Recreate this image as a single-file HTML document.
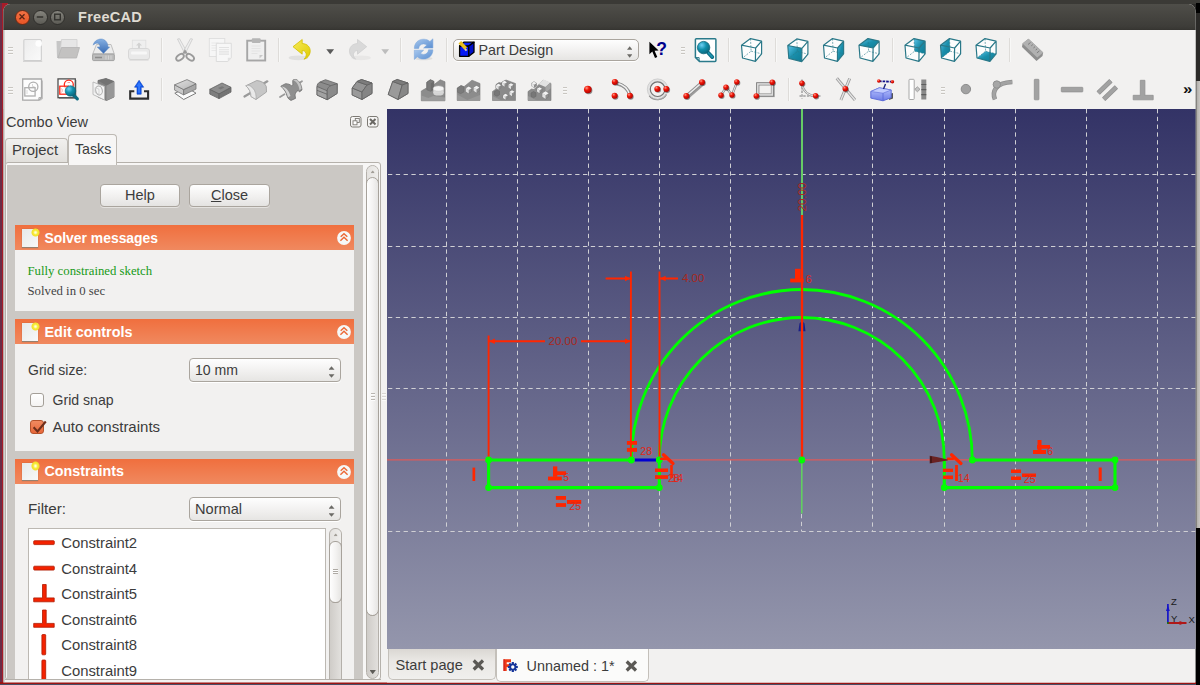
<!DOCTYPE html>
<html><head><meta charset="utf-8"><title>FreeCAD</title>
<style>
*{box-sizing:border-box;margin:0;padding:0}
html,body{width:1200px;height:685px;overflow:hidden;background:#2c2b29}
body{position:relative;font-family:"Liberation Sans","DejaVu Sans",sans-serif;font-size:14.5px;color:#3c3c3c}
div,span{position:absolute}
svg{position:absolute;overflow:visible}
#desk{left:0;top:0;width:1200px;height:685px;background:#2b2a28}
#deskl{left:0;top:3.3px;width:8px;height:682px;background:linear-gradient(90deg,#6b2d47 0 2.2px,#a81c28 2.2px 8px)}
#topstrip{left:0;top:0;width:1200px;height:4px;background:#3b3a36}
#rstrip1{left:1195.5px;top:3px;width:5px;height:10px;background:#000}
#rstrip2{left:1195.5px;top:80.5px;width:5px;height:447.5px;background:linear-gradient(90deg,#6e6c68,#b5b3af 30%,#cfcdc9)}
#rstrip3{left:1195.5px;top:528px;width:5px;height:157px;background:#000}
#botstrip{left:0;top:682px;width:1196px;height:3px;background:linear-gradient(#9a1414 0 1.6px,#4a5068 1.6px)}
#win{left:0;top:0;width:1200px;height:685px;background:#f2f1f0;clip-path:inset(4px 4.5px 2.5px 3.3px round 7px 7px 0 0)}
#title{left:0;top:0;width:1200px;height:30px;background:linear-gradient(#3b3a36 0 3.6px,#4f4e49 4px,#3e3d39 26px,#383733 29.4px,#2e2d2a 30px);}
#title .t{left:78px;top:8px;font-weight:bold;font-size:14.5px;line-height:19px;color:#dfdbd2;letter-spacing:.3px;white-space:nowrap}
.wb{width:15.4px;height:15.4px;border-radius:50%;top:9.5px;background:linear-gradient(#85847d,#5c5b55);border:1px solid #302f2c}
.wb.c{background:linear-gradient(#f27245,#e85526);border-color:#6e2a14}
.sep{width:2px;height:24px;background:#dedcd9;border-right:1px solid #f8f8f7}
.grip{width:4.5px;height:8px;background:repeating-linear-gradient(#c9c6c1 0 1px,#f8f8f7 1px 2px,#f2f1f0 2px 3px)}
.lbl{white-space:nowrap;line-height:18px}
.combo{border:1px solid #aaa59e;border-radius:4px;background:linear-gradient(#fefefe,#f0efee 60%,#e6e5e3);box-shadow:0 1px 0 #fff}
.ud{width:5.4px;height:3.5px;background:#6b6a66}
.ud.u{clip-path:polygon(50% 0,100% 100%,0 100%)}
.ud.d{clip-path:polygon(0 0,100% 0,50% 100%)}
.btn{border:1px solid #aaa59e;border-radius:4px;background:linear-gradient(#fefefe,#f1f0ef 55%,#e4e3e1);text-align:center;line-height:21px;box-shadow:0 1px 0 #e4e2df}
.hdr{left:15px;width:339px;height:24.8px;background:linear-gradient(#f06f3e,#f0895f);color:#fff;font-weight:bold;font-size:14.5px}
.hdr .lbl{left:29.5px;top:3.5px}
.hdr .pg{left:6.5px;top:3.8px;width:16px;height:18.8px;background:linear-gradient(135deg,#e6e9ea,#f8f8f8);border-bottom:1px solid #96806f;box-shadow:0 0 1px rgba(120,70,40,.5)}
.hdr .st{left:15.5px;top:2.6px;width:9.4px;height:9.4px;border-radius:50%;background:radial-gradient(#ffffd8 8%,#f8ec3a 35%,#f3e02c 55%,rgba(243,224,44,0) 72%)}
.hdr .col{left:322px;top:6px;width:13px;height:13px;border-radius:50%;background:#fff}
.body{left:15px;width:339px;background:#f2f1f0;overflow:hidden}
.cb{width:14px;height:14px;border:1px solid #a49f98;border-radius:3px;background:linear-gradient(#fff,#f4f3f2)}
.cb.on{background:linear-gradient(#f08a60,#e8683a);border-color:#b5532b}
.row{left:0;width:296px;height:25.5px}
.row .lbl{left:32.7px;top:4px}
.ser{font-family:"Liberation Serif","DejaVu Serif",serif;font-size:12.75px;white-space:nowrap;line-height:16px}
</style></head><body>
<div id="desk"></div>
<div id="topstrip"></div>
<div id="deskl"></div>
<div id="rstrip1"></div><div id="rstrip2"></div><div id="rstrip3"></div>
<div id="botstrip"></div>
<div id="win">
 <div id="title">
  <div class="wb c" style="left:14.5px"></div>
  <div class="wb" style="left:32.5px"></div>
  <div class="wb" style="left:50px"></div>
  <svg style="left:14px;top:9px" width="52" height="16" viewBox="14 9 52 16"><path d="M19.5 14.300l5 5M24.5 14.300l-5 5" stroke="#5a2413" stroke-width="1.3"/><path d="M36.8 17h6.4" stroke="#33322e" stroke-width="1.6"/><rect x="54.7" y="14.2" width="5.6" height="5.6" fill="none" stroke="#33322e" stroke-width="1.4"/></svg>
  <div class="t">FreeCAD</div>
 </div>
<div style="left:0;top:30px;width:1200px;height:79px;background:#f2f1f0"></div>
<div class="sep" style="left:161px;top:38px"></div>
<div class="sep" style="left:278px;top:38px"></div>
<div class="sep" style="left:400px;top:38px"></div>
<div class="sep" style="left:446px;top:38px"></div>
<div class="sep" style="left:728px;top:38px"></div>
<div class="sep" style="left:774.5px;top:38px"></div>
<div class="sep" style="left:892px;top:38px"></div>
<div class="sep" style="left:1009px;top:38px"></div>
<div class="sep" style="left:161px;top:78px;height:23px"></div>
<div class="sep" style="left:787.5px;top:78px;height:23px"></div>
<div class="grip" style="left:8px;top:46.5px"></div>
<div class="grip" style="left:680.7px;top:46.5px"></div>
<div class="grip" style="left:8px;top:86.7px"></div>
<div class="grip" style="left:562.7px;top:86.7px"></div>
<div class="grip" style="left:940.7px;top:86.7px"></div>
<div class="combo" style="left:453px;top:38.5px;width:186px;height:22.5px;border-radius:5px"><div class="lbl" style="left:24.5px;top:1.5px;font-size:14.3px">Part Design</div><div class="ud u" style="left:173px;top:6.7px"></div><div class="ud d" style="left:173px;top:14.7px"></div></div>
<div class="lbl" style="left:1183.2px;top:80.3px;font-weight:bold;font-size:15px;color:#111;transform:scaleX(1.12);transform-origin:0 0">&#187;</div>
<svg style="left:0;top:30px" width="1200" height="79" viewBox="0 30 1200 79">
<defs>
<linearGradient id="gpg" x1="0" y1="0" x2="1" y2="1"><stop offset="0" stop-color="#ececec"/><stop offset="1" stop-color="#fafafa"/></linearGradient>
<radialGradient id="gteal" cx=".35" cy=".3" r=".8"><stop offset="0" stop-color="#6fd0f4"/><stop offset=".45" stop-color="#1291ad"/><stop offset="1" stop-color="#0a5f74"/></radialGradient>
<linearGradient id="gtealf" x1="0" y1="0" x2="1" y2="1"><stop offset="0" stop-color="#5cc4ea"/><stop offset=".5" stop-color="#1a8eaa"/><stop offset="1" stop-color="#0f7d97"/></linearGradient>
<radialGradient id="gred" cx=".35" cy=".3" r=".75"><stop offset="0" stop-color="#ff9a8a"/><stop offset=".4" stop-color="#f01808"/><stop offset="1" stop-color="#a80000"/></radialGradient>
<linearGradient id="gyel" x1="0" y1="0" x2="1" y2="1"><stop offset="0" stop-color="#f6ea5a"/><stop offset="1" stop-color="#e0cc00"/></linearGradient>
<linearGradient id="gblue" x1="0" y1="0" x2="0" y2="1"><stop offset="0" stop-color="#86b0e2"/><stop offset="1" stop-color="#3a6cb4"/></linearGradient>
<linearGradient id="grf" x1="0" y1="0" x2="1" y2="1"><stop offset="0" stop-color="#a8c8ee"/><stop offset="1" stop-color="#5a8ed0"/></linearGradient>
<linearGradient id="gbox" x1="0" y1="0" x2="0" y2="1"><stop offset="0" stop-color="#b9c4ff"/><stop offset="1" stop-color="#6d7ce6"/></linearGradient>
<linearGradient id="ggr" x1="0" y1="0" x2="1" y2="1"><stop offset="0" stop-color="#e0e0e0"/><stop offset="1" stop-color="#b4b4b4"/></linearGradient>
</defs>
<g><rect x="23.8" y="39.5" width="17.6" height="21" rx="1" fill="url(#gpg)" stroke="#d2d2d2" stroke-width="1.2"/><path d="M23 61.3H42.2" stroke="#c4c4c4" stroke-width="1.2" opacity=".7"/><circle cx="38.7" cy="43.5" r="3.3" fill="#fff" opacity=".9"/></g>
<g><path d="M56.5 41h5l-1 17h-3.5z" fill="#c6c6c6"/><path d="M61.5 39.5h15.5v8l-1.5 10h-16z" fill="#e6e6e6" stroke="#cfcfcf" stroke-width=".8"/><path d="M61.5 47.5h18l-3 10.5h-18.5z" fill="#c3c2c1" stroke="#b4b4b4" stroke-width=".8"/></g>
<g><path d="M96.5 44.5h14.5l3.3 9.5h-21.6z" fill="#ececec" stroke="#b9b9b9" stroke-width=".9"/><rect x="92.6" y="54" width="21.7" height="6.6" rx="1" fill="#bdbdbd" stroke="#9a9a9a" stroke-width=".9"/><path d="M95 57.5h7" stroke="#8c8c8c" stroke-width="1.3"/><path d="M106 55.5v4M108.5 55.5v4M111 55.5v4" stroke="#d4d4d4" stroke-width="1"/><path d="M93.2 45.2C94 40.5 99 38.4 102.6 39.2C106.2 40 108 43.5 108 47L109.6 47L103.5 53.4L97.2 47L100 47C100 45 99.3 43.5 97.5 43.200C95.8 43 94.3 43.8 93.2 45.200Z" fill="url(#gblue)" stroke="#5a88c4" stroke-width=".5"/></g>
<g opacity=".9"><rect x="132.3" y="40.2" width="13.5" height="9.5" fill="#efefef" stroke="#dcdcdc" stroke-width=".8"/><path d="M139 42.5l-3 3h2v2.500h2v-2.500h2z" fill="#cfcfcf"/><rect x="128.5" y="48.5" width="21" height="11" rx="2.5" fill="#e9e9e9" stroke="#d2d2d2" stroke-width=".9"/><rect x="131" y="51.5" width="16" height="3" rx="1" fill="#f8f8f8"/><path d="M129.5 60h19" stroke="#cfcfcf" stroke-width="1"/></g>
<g><path d="M177.5 39l2-.3 7.5 13.5-2.2 1.500z" fill="#eeeeee" stroke="#c9c9c9" stroke-width=".8"/><path d="M192.5 39l-2-.3-7.5 13.5 2.2 1.500z" fill="#eeeeee" stroke="#c9c9c9" stroke-width=".8"/><ellipse cx="180" cy="57.3" rx="4.3" ry="2.6" transform="rotate(-38 180 57.3)" fill="none" stroke="#9b9b9b" stroke-width="1.9"/><ellipse cx="190.2" cy="57.3" rx="4.3" ry="2.6" transform="rotate(38 190.2 57.3)" fill="none" stroke="#9b9b9b" stroke-width="1.9"/><path d="M183.5 53.500l1.5-2.5 1.5 2.5" stroke="#9b9b9b" stroke-width="1.8" fill="none"/></g>
<g><rect x="209.3" y="38.5" width="15.5" height="18" fill="#f6f6f6" stroke="#dedede" stroke-width=".9"/><path d="M211.5 43h7M211.5 45.500h7M211.5 48h7M211.5 50.500h7" stroke="#e6e6e6" stroke-width=".9"/><path d="M216.3 43.300h15v14.500l-3.5 3.700h-11.500z" fill="#f7f7f7" stroke="#d9d9d9" stroke-width=".9"/><path d="M219 47.500h10M219 49.700h10M219 51.900h10M219 54.100h10" stroke="#e2e2e2" stroke-width="1.1"/><path d="M227.8 61.500v-3.700h3.500z" fill="#e2e2e2"/></g>
<g><rect x="247.2" y="40.7" width="18" height="19.8" fill="#f0f0f0" stroke="#a6a6a6" stroke-width="1.9"/><rect x="250" y="43.5" width="12.5" height="14.5" fill="#efefef"/><path d="M251.5 46h9M251.5 48.500h9M251.5 51h9M251.5 53.500h6" stroke="#e3e3e3" stroke-width="1.2"/><rect x="251.8" y="38.3" width="8.8" height="4.7" rx="1" fill="#b5b5b5"/><path d="M259.5 58.500v-3.500h3.500z" fill="#c8c8c8"/></g>
<g><ellipse cx="298.5" cy="57.8" rx="10" ry="2.4" fill="#000" opacity=".07"/><path d="M293 46.700l9.2-7.200v4c5.5.3 8.3 4 8 8.2-.3 3.8-3 6.6-6.2 7.5 2-1.8 2.7-4 2-6-.6-1.7-2-2.6-3.8-2.700v3.700z" fill="url(#gyel)" stroke="#d3bf00" stroke-width=".8" stroke-linejoin="round"/></g>
<path d="M326.3 49.200h7.800l-3.9 5z" fill="#5a5a5a"/>
<g><ellipse cx="361" cy="57.8" rx="10" ry="2.4" fill="#000" opacity=".04"/><path d="M366.7 46.700l-9.2-7.200v4c-5.5.3-8.3 4-8 8.2.3 3.8 3 6.6 6.2 7.5-2-1.8-2.7-4-2-6 .6-1.7 2-2.6 3.8-2.700v3.700z" fill="#d9d9d9" stroke="#cfcfcf" stroke-width=".8" stroke-linejoin="round"/></g>
<path d="M381.3 49.200h7.800l-3.9 5z" fill="#bdbdbd"/>
<g><ellipse cx="423.5" cy="58.5" rx="9" ry="1.8" fill="#000" opacity=".08"/><path d="M414.3 48.500c0-5.5 4-9.3 9.3-9.3 2.6 0 4.7.8 6.3 2.300l3-2.700v9.300h-9.300l3.1-3c-.9-.8-1.9-1.2-3.2-1.2-2.7 0-4.6 1.9-4.8 4.600z" fill="url(#grf)" stroke="#78a4da" stroke-width=".5"/><path d="M432.9 49.800c0 5.5-4 9.3-9.3 9.3-2.6 0-4.7-.8-6.3-2.300l-3 2.700v-9.300h9.300l-3.1 3c.9.8 1.9 1.2 3.2 1.2 2.7 0 4.6-1.9 4.8-4.600z" fill="url(#grf)" stroke="#78a4da" stroke-width=".5"/></g>
<g stroke="#000" stroke-width="1.3" stroke-linejoin="round"><path d="M459.6 46h9.200v10.300h-9.200z" fill="#0618f4"/><path d="M459.6 46l4.2-3.800h10.200l-5.2 3.800z" fill="#0a24ff"/><path d="M468.8 46l5.2-3.800v10l-5.2 4.100z" fill="#0010c8"/></g><path d="M459.8 42.200l6 6.3" stroke="#e8be1c" stroke-width="3.6"/><path d="M465 49l1.6 1.6" stroke="#d8d0b0" stroke-width="2"/>
<path d="M649.4 41.800v12.400l2.9-2.6 2.7 6.3 2.3-1-2.7-6.1 4-.2z" fill="#000"/><text x="656.3" y="55" font-family="Liberation Sans,sans-serif" font-weight="bold" font-size="17.5" fill="#00008c">?</text>
<g><path d="M696.3 38.800h18.700a.9.9 0 0 1 .9.900v20.800a.9.9 0 0 1-.9.900h-15.500l-4.1-4v-17.700a.9.9 0 0 1 .9-.9z" fill="#fff" stroke="#2a7a8a" stroke-width="1.5"/><path d="M695.6 57.600h3.500v3.5" fill="none" stroke="#2a7a8a" stroke-width="1"/><path d="M708 52.500l4.3 4.6" stroke="#0e6c82" stroke-width="3.8" stroke-linecap="round"/><path d="M708.5 53l3.6 3.9" stroke="#1c94b0" stroke-width="1.8" stroke-linecap="round"/><circle cx="703.6" cy="47.6" r="6.2" fill="url(#gteal)" stroke="#0c6478" stroke-width=".8"/></g>
<path d="M741.5 45.2L750.5 38.6L761.6 41.1L761.6 53.8L755.4 61.4L742.5 58.0Z" fill="#fdfdfd"/><path d="M750.5 38.6L751.1 51.2L742.5 58.0M751.1 51.2L761.6 53.8" stroke="#2a7888" stroke-width=".8" stroke-dasharray="2 1.3" fill="none" opacity=".75"/><path d="M741.5 45.2L755.6 48.0L761.6 41.1L750.5 38.6ZM741.5 45.2L742.5 58.0L755.4 61.4L761.6 53.8L761.6 41.1M755.6 48.0L755.4 61.4" stroke="#2a7888" stroke-width="1.2" fill="none" stroke-linejoin="round"/>
<path d="M787.8 45.5L796.8 38.9L807.9 41.4L807.9 54.1L801.7 61.7L788.8 58.3Z" fill="#fdfdfd"/><path d="M787.8 45.5L801.9 48.3L801.7 61.7L788.8 58.3Z" fill="url(#gtealf)"/><path d="M796.8 38.9L797.4 51.5L788.8 58.3M797.4 51.5L807.9 54.1" stroke="#2a7888" stroke-width=".8" stroke-dasharray="2 1.3" fill="none" opacity=".75"/><path d="M787.8 45.5L801.9 48.3L807.9 41.4L796.8 38.9ZM787.8 45.5L788.8 58.3L801.7 61.7L807.9 54.1L807.9 41.4M801.9 48.3L801.7 61.7" stroke="#2a7888" stroke-width="1.2" fill="none" stroke-linejoin="round"/>
<path d="M823.5 45.2L832.5 38.6L843.6 41.1L843.6 53.8L837.4 61.4L824.5 58.0Z" fill="#fdfdfd"/><path d="M837.6 48.0L843.6 41.1L843.6 53.8L837.4 61.4Z" fill="url(#gtealf)"/><path d="M832.5 38.6L833.1 51.2L824.5 58.0M833.1 51.2L843.6 53.8" stroke="#2a7888" stroke-width=".8" stroke-dasharray="2 1.3" fill="none" opacity=".75"/><path d="M823.5 45.2L837.6 48.0L843.6 41.1L832.5 38.6ZM823.5 45.2L824.5 58.0L837.4 61.4L843.6 53.8L843.6 41.1M837.6 48.0L837.4 61.4" stroke="#2a7888" stroke-width="1.2" fill="none" stroke-linejoin="round"/>
<path d="M859.0 45.2L868.0 38.6L879.1 41.1L879.1 53.8L872.9 61.4L860.0 58.0Z" fill="#fdfdfd"/><path d="M859.0 45.2L873.1 48.0L879.1 41.1L868.0 38.6Z" fill="url(#gtealf)"/><path d="M868.0 38.6L868.6 51.2L860.0 58.0M868.6 51.2L879.1 53.8" stroke="#2a7888" stroke-width=".8" stroke-dasharray="2 1.3" fill="none" opacity=".75"/><path d="M859.0 45.2L873.1 48.0L879.1 41.1L868.0 38.6ZM859.0 45.2L860.0 58.0L872.9 61.4L879.1 53.8L879.1 41.1M873.1 48.0L872.9 61.4" stroke="#2a7888" stroke-width="1.2" fill="none" stroke-linejoin="round"/>
<path d="M905.0 45.2L914.0 38.6L925.1 41.1L925.1 53.8L918.9 61.4L906.0 58.0Z" fill="#fdfdfd"/><path d="M914.0 38.6L925.1 41.1L925.1 53.8L914.6 51.2Z" fill="url(#gtealf)"/><path d="M914.0 38.6L914.6 51.2L906.0 58.0M914.6 51.2L925.1 53.8" stroke="#2a7888" stroke-width=".8" stroke-dasharray="2 1.3" fill="none" opacity=".75"/><path d="M905.0 45.2L919.1 48.0L925.1 41.1L914.0 38.6ZM905.0 45.2L906.0 58.0L918.9 61.4L925.1 53.8L925.1 41.1M919.1 48.0L918.9 61.4" stroke="#2a7888" stroke-width="1.2" fill="none" stroke-linejoin="round"/>
<path d="M940.5 45.2L949.5 38.6L960.6 41.1L960.6 53.8L954.4 61.4L941.5 58.0Z" fill="#fdfdfd"/><path d="M940.5 45.2L949.5 38.6L950.1 51.2L941.5 58.0Z" fill="url(#gtealf)"/><path d="M949.5 38.6L950.1 51.2L941.5 58.0M950.1 51.2L960.6 53.8" stroke="#2a7888" stroke-width=".8" stroke-dasharray="2 1.3" fill="none" opacity=".75"/><path d="M940.5 45.2L954.6 48.0L960.6 41.1L949.5 38.6ZM940.5 45.2L941.5 58.0L954.4 61.4L960.6 53.8L960.6 41.1M954.6 48.0L954.4 61.4" stroke="#2a7888" stroke-width="1.2" fill="none" stroke-linejoin="round"/>
<path d="M976.0 45.2L985.0 38.6L996.1 41.1L996.1 53.8L989.9 61.4L977.0 58.0Z" fill="#fdfdfd"/><path d="M977.0 58.0L989.9 61.4L996.1 53.8L985.6 51.2Z" fill="url(#gtealf)"/><path d="M985.0 38.6L985.6 51.2L977.0 58.0M985.6 51.2L996.1 53.8" stroke="#2a7888" stroke-width=".8" stroke-dasharray="2 1.3" fill="none" opacity=".75"/><path d="M976.0 45.2L990.1 48.0L996.1 41.1L985.0 38.6ZM976.0 45.2L977.0 58.0L989.9 61.4L996.1 53.8L996.1 41.1M990.1 48.0L989.9 61.4" stroke="#2a7888" stroke-width="1.2" fill="none" stroke-linejoin="round"/>
<g><path d="M1028.5 38.700l14.7 13.8-.7 3.5-6 5-14.5-14 .500-3.500z" fill="#8e8e8e"/><path d="M1028.5 38.700l14.7 13.8-6 5-14.7-14z" fill="#b1b1b1"/><path d="M1030.5 42.500l-2.5 2M1032.8 44.600l-1.5 1.200M1035 46.700l-1.5 1.200M1037.2 48.800l-1.5 1.200M1039.4 50.900l-2.5 2" stroke="#7d7d7d" stroke-width="1"/></g>
<g><path d="M24 80.5v20h17l2-2v-18z" fill="#b9b9b9" opacity=".8"/><path d="M22.7 79h18.8v18.6l-2.6 2.6h-16.2z" fill="#fdfdfd" stroke="#a9a9a9" stroke-width="1.3"/><path d="M38.9 100.2v-2.6h2.6" fill="none" stroke="#a9a9a9" stroke-width="1"/><circle cx="33.3" cy="86.8" r="4.6" fill="none" stroke="#b0b0b0" stroke-width="1.3"/><rect x="24.8" y="87.7" width="10.3" height="8.3" fill="none" stroke="#b0b0b0" stroke-width="1.3"/><path d="M27 90v4M32.5 84v2.5h2" stroke="#cfcfcf" stroke-width=".8" fill="none"/></g>
<g><path d="M59 80v19h17.5v-19z" fill="#8c8c8c" opacity=".7"/><rect x="58" y="78.9" width="17.3" height="18.8" fill="#fff" stroke="#4f4f4f" stroke-width="1.3"/><circle cx="68.8" cy="84.7" r="4.5" fill="none" stroke="#ff2a1a" stroke-width="1.3"/><rect x="59.8" y="86.2" width="8.5" height="8" fill="#fff" fill-opacity=".6" stroke="#ff2a1a" stroke-width="1.3"/><path d="M61.5 88.5c1 1 1 3 0 4M67.5 82.5h2.5" stroke="#e88" stroke-width=".8" fill="none"/><path d="M73.5 95l3.8 3.8" stroke="#0e6c82" stroke-width="3.2" stroke-linecap="round"/><circle cx="70.5" cy="91" r="5.3" fill="url(#gteal)" stroke="#0c6478" stroke-width=".6"/></g>
<g><path d="M98 80.5l8-2 8 3v15.5l-7.5 3.5-8.5-3.5z" fill="#828282" stroke="#6a6a6a" stroke-width=".8"/><path d="M106.5 85.5l7.5-4v15.5l-7.5 3.5z" fill="#979797"/><path d="M98 80.5l8-2 8 3-7.5 4z" fill="#737373"/><path d="M93 82l11.5 4.5v13.5l-11.5-5.5z" fill="#f4f4f4" stroke="#b5b5b5" stroke-width=".9"/><ellipse cx="99" cy="90.5" rx="3.3" ry="4.5" transform="rotate(-12 99 90.5)" fill="none" stroke="#aaaaaa" stroke-width="1"/><path d="M95 87.5l4 1.7v5l-4-1.7z" fill="none" stroke="#c8c8c8" stroke-width=".7"/></g>
<g><path d="M134.3 91.3h-4.1v7.3h17.9v-7.3h-4.1" fill="none" stroke="#2e2e2e" stroke-width="2.1"/><path d="M139.1 80.3l4.6 6.9h-2.5v7h-4.2v-7h-2.5z" fill="#1058ee" stroke="#0a3fc0" stroke-width=".6"/><path d="M139.1 82l2.6 4.3h-1.6v6.5h-2v-6.5h-1.6z" fill="#3a80ff" opacity=".8"/></g>
<path d="M174.8 93.2l8.9 6.3 12.3-6.3-8.9-5.5z" fill="#fcfcfc" stroke="#6e6e6e" stroke-width=".9" stroke-linejoin="round"/>
<path d="M174.6 84.8L183.6 89.6L183.6 94.89999999999999L174.6 90.1Z" fill="#c9c9c9" stroke="#767676" stroke-width=".8" stroke-linejoin="round"/><path d="M183.6 89.6L196 83.8L196 89.1L183.6 94.89999999999999Z" fill="#a6a6a6" stroke="#767676" stroke-width=".8" stroke-linejoin="round"/><path d="M174.6 84.8L187 79.6L196 83.8L183.6 89.6Z" fill="url(#ggr)" stroke="#767676" stroke-width=".8" stroke-linejoin="round"/>
<path d="M209.8 89.3L219 93.8L219 98.6L209.8 94.1Z" fill="#7e7e7e" stroke="#626262" stroke-width=".8" stroke-linejoin="round"/><path d="M219 93.8L231 87.3L231 92.1L219 98.6Z" fill="#747474" stroke="#626262" stroke-width=".8" stroke-linejoin="round"/><path d="M209.8 89.3L222 83L231 87.3L219 93.8Z" fill="#8e8e8e" stroke="#626262" stroke-width=".8" stroke-linejoin="round"/>
<path d="M218 88l4-1.7 2.5 1.3-4 1.8z" fill="#787878"/>
<g><path d="M244.5 96.5l5.5-3.3M262.5 84.3l4.8-3" stroke="#9a9a9a" stroke-width="2.2" stroke-linecap="round"/><path d="M245.8 85.8l11-5.3c4 .3 8.3 2.5 9.5 6l.2 5.5-10.5 7.5-5-3c0-4-1.7-8-5.2-10.7z" fill="#c6c6c6" stroke="#9c9c9c" stroke-width=".8" stroke-linejoin="round"/><path d="M245.8 85.8c1.5-.8 3.2-.6 4.8.4 3.5 2.2 5.4 6.3 5.5 10.5l-.1 2.8-5-3c0-4-1.7-8-5.2-10.7z" fill="#e9e9e9" stroke="#a8a8a8" stroke-width=".7"/></g>
<g><path d="M280 97l4.5-2.8M298.5 83.5l3.5-2.3" stroke="#9a9a9a" stroke-width="1.8" stroke-linecap="round"/><path d="M280.8 86.2l4.7-2.5c2.5 0 4.5 .8 6 2l1.5-.8c-.3-1.8-.5-3.3 0-5l3-.5c3.5 1.5 5.5 5.5 6 10.5l-2.5 2-1.5-1.5c-1.5 1-2.5 2.5-3 4.5l.5 3.5-4.5 2c-2-1-3-2-3.5-3.5l-.5-1c-.5-3-2.5-6.5-6.2-9.7z" fill="#8f8f8f" stroke="#6e6e6e" stroke-width=".8" stroke-linejoin="round"/><path d="M281.5 86.5c3.5.3 7.5 3.5 9 9.5l-2.5 1.3c-1-4.5-3-8-6.5-10.8z" fill="#d4d4d4"/><path d="M293 80.2c3.5 1 6 5 6.5 10l2-1.5c-.5-4.5-2.5-8-6-9.3z" fill="#c4c4c4"/></g>
<g stroke="#626262" stroke-width=".8" stroke-linejoin="round"><path d="M317 86.5c0-2 1-3.5 3-4.5l5.5-2.3 11.7 4-.2 9.8-9.8 6.2-10.2-4.7z" fill="#8c8c8c"/><path d="M317 86.5l10.2 4.3v8.9l-10.2-4.7z" fill="#a2a2a2"/><path d="M317 90.3l10.2 4" fill="none"/><path d="M327.2 90.8c0-2.5 1.5-4.3 4-5.3l6-1.8v9.8l-10 6.2z" fill="#8a8a8a"/><path d="M320 82l10.5 3.5" fill="none"/></g>
<g stroke="#626262" stroke-width=".8" stroke-linejoin="round"><path d="M352.2 88l4.8-6.5 4.5-2 10.5 3.5v10.5l-10 6-9.8-4.5z" fill="#8a8a8a"/><path d="M352.2 88l9.8 4v7.5l-9.8-4.5z" fill="#9a9a9a"/><path d="M352.2 88l4.8-6.5 10 3.5-5 7z" fill="#949494"/><path d="M362 92l5-7 5-2v10.5l-10 6z" fill="#858585"/><path d="M357 81.5l4.5-2 10.5 3.5-5 2z" fill="#7c7c7c"/></g>
<g stroke="#626262" stroke-width=".8" stroke-linejoin="round"><path d="M388.2 94.5l4.5-13 4.5-2 10.8 3.5v10.5l-10 6z" fill="#8a8a8a"/><path d="M388.2 94.5l4.5-13 9.5 3.5-4.2 14.5z" fill="#9a9a9a"/><path d="M392.7 81.5l4.5-2 10.8 3.5-5.8 2z" fill="#7c7c7c"/><path d="M398 99.5l4.2-14.5 5.8-2v10.5z" fill="#878787"/></g>
<g><path d="M421.3 91l5.5-3.2v-5.5l3.5-2.5 3.5 1.5v3.5l6.5-5 4.7 2v19h-23.7z" fill="#8c8c8c" stroke="#7a7a7a" stroke-width=".6"/><path d="M421.3 95.5l7 2.5 5-2 11.7 1.5v3.3h-23.7z" fill="#9c9c9c"/><path d="M426.8 82.3l3.5-2.5 3.5 1.5v8l-3 2-4-1.5z" fill="#7a7a7a" stroke="#696969" stroke-width=".6"/><path d="M430.8 83.5l3-2.2v8l-3 2z" fill="#6c6c6c"/><ellipse cx="438.5" cy="93" rx="5.2" ry="2.6" fill="#d4d4d4"/><path d="M433.3 88.5h10.4v4.5h-10.4z" fill="#d8d8d8"/><ellipse cx="438.5" cy="88.5" rx="5.2" ry="2.6" fill="#f4f4f4" stroke="#c4c4c4" stroke-width=".5"/></g>
<g><path d="M457.2 88l3.8-2.5 3 1.2 8-6.5 8 3.3v17h-22.8z" fill="#8c8c8c" stroke="#7a7a7a" stroke-width=".6"/><path d="M457.2 94.5l10 5.5 12.8-5v5.5h-22.8z" fill="#999"/><path d="M457.5 88l3.5-2.3 3 1.2v5l-3.3 1.8-3.2-1.5z" fill="#7b7b7b" stroke="#6a6a6a" stroke-width=".5"/><path d="M465.8 88.205l2.9-1.74 2.9 1.74v3.19l-2.9 2.03-2.9-2.03z" fill="#8f8f8f" stroke="#777" stroke-width=".5"/><path d="M465.8 88.205l2.9-1.74 2.9 1.74-2.9 1.885z" fill="#f2f2f2"/><path d="M465.8 88.205l2.9 1.885v3.3349999999999995l-2.9-2.03z" fill="#e2e2e2"/><path d="M473.6 87.605l2.9-1.74 2.9 1.74v3.19l-2.9 2.03-2.9-2.03z" fill="#8f8f8f" stroke="#777" stroke-width=".5"/><path d="M473.6 87.605l2.9-1.74 2.9 1.74-2.9 1.885z" fill="#f2f2f2"/><path d="M473.6 87.605l2.9 1.885v3.3349999999999995l-2.9-2.03z" fill="#e2e2e2"/></g>
<g><path d="M492.5 91.5l3.5-2.5v-4.5l3-2 2 .5 5-3 9.5 3.5v17h-23z" fill="#8a8a8a" stroke="#7a7a7a" stroke-width=".6"/><path d="M492.5 96l9 4.5h-9z" fill="#9a9a9a"/><path d="M496.0 85.125l2.5-1.5 2.5 1.5v2.75l-2.5 1.75-2.5-1.75z" fill="#8f8f8f" stroke="#777" stroke-width=".5"/><path d="M496.0 85.125l2.5-1.5 2.5 1.5-2.5 1.625z" fill="#f2f2f2"/><path d="M496.0 85.125l2.5 1.625v2.875l-2.5-1.75z" fill="#e2e2e2"/><path d="M502.0 82.125l2.5-1.5 2.5 1.5v2.75l-2.5 1.75-2.5-1.75z" fill="#8f8f8f" stroke="#777" stroke-width=".5"/><path d="M502.0 82.125l2.5-1.5 2.5 1.5-2.5 1.625z" fill="#f2f2f2"/><path d="M502.0 82.125l2.5 1.625v2.875l-2.5-1.75z" fill="#e2e2e2"/><path d="M508.5 84.625l2.5-1.5 2.5 1.5v2.75l-2.5 1.75-2.5-1.75z" fill="#8f8f8f" stroke="#777" stroke-width=".5"/><path d="M508.5 84.625l2.5-1.5 2.5 1.5-2.5 1.625z" fill="#f2f2f2"/><path d="M508.5 84.625l2.5 1.625v2.875l-2.5-1.75z" fill="#e2e2e2"/><path d="M509.5 91.625l2.5-1.5 2.5 1.5v2.75l-2.5 1.75-2.5-1.75z" fill="#8f8f8f" stroke="#777" stroke-width=".5"/><path d="M509.5 91.625l2.5-1.5 2.5 1.5-2.5 1.625z" fill="#f2f2f2"/><path d="M509.5 91.625l2.5 1.625v2.875l-2.5-1.75z" fill="#e2e2e2"/><path d="M503.0 95.125l2.5-1.5 2.5 1.5v2.75l-2.5 1.75-2.5-1.75z" fill="#8f8f8f" stroke="#777" stroke-width=".5"/><path d="M503.0 95.125l2.5-1.5 2.5 1.5-2.5 1.625z" fill="#f2f2f2"/><path d="M503.0 95.125l2.5 1.625v2.875l-2.5-1.75z" fill="#e2e2e2"/><path d="M494.5 91.5l2.5-1.5 2.5 1.3v3.5l-2.5 1.5-2.5-1.3z" fill="#777" stroke="#666" stroke-width=".5"/></g>
<g><path d="M528 91.5l3.5-2.5 2.5.5 9-9.3 8 3.3v17h-23z" fill="#8c8c8c" stroke="#7a7a7a" stroke-width=".6"/><path d="M528 96l9 4.5h-9z" fill="#9a9a9a"/><path d="M538.5 84l5-4.5 7 3-5 4.5z" fill="#e2e2e2"/><path d="M545.5 87l5-4.5v6l-5 4.5z" fill="#a5a5a5"/><path d="M531.5 83.125l2.5-1.5 2.5 1.5v2.75l-2.5 1.75-2.5-1.75z" fill="#8f8f8f" stroke="#777" stroke-width=".5"/><path d="M531.5 83.125l2.5-1.5 2.5 1.5-2.5 1.625z" fill="#f2f2f2"/><path d="M531.5 83.125l2.5 1.625v2.875l-2.5-1.75z" fill="#e2e2e2"/><path d="M537.0 88.625l2.5-1.5 2.5 1.5v2.75l-2.5 1.75-2.5-1.75z" fill="#8f8f8f" stroke="#777" stroke-width=".5"/><path d="M537.0 88.625l2.5-1.5 2.5 1.5-2.5 1.625z" fill="#f2f2f2"/><path d="M537.0 88.625l2.5 1.625v2.875l-2.5-1.75z" fill="#e2e2e2"/><path d="M542.3 93.24l3.2-1.92 3.2 1.92v3.5200000000000005l-3.2 2.2399999999999998-3.2-2.2399999999999998z" fill="#8f8f8f" stroke="#777" stroke-width=".5"/><path d="M542.3 93.24l3.2-1.92 3.2 1.92-3.2 2.08z" fill="#f2f2f2"/><path d="M542.3 93.24l3.2 2.08v3.6799999999999997l-3.2-2.2399999999999998z" fill="#e2e2e2"/><path d="M531 93l2.5-1.5 2.5 1.3v3.5l-2.5 1.5-2.5-1.3z" fill="#777" stroke="#666" stroke-width=".5"/></g>
<circle cx="588.5999999999999" cy="90.4" r="3.8" fill="#3a3a3a" opacity=".55"/><circle cx="587.8" cy="89.5" r="3.8" fill="url(#gred)"/>
<path d="M616.5 83c7 1.5 11.5 6 13.3 12" fill="none" stroke="#555" stroke-width="3.2" opacity=".55" transform="translate(.8 .9)"/><path d="M616.5 83c7 1.5 11.5 6 13.3 12" fill="none" stroke="#8c8c8c" stroke-width="3"/><path d="M616.5 83c7 1.5 11.5 6 13.3 12" fill="none" stroke="#f2f2f2" stroke-width="1.4"/>
<circle cx="615.5999999999999" cy="82.80000000000001" r="3" fill="#3a3a3a" opacity=".55"/><circle cx="614.8" cy="81.9" r="3" fill="url(#gred)"/><circle cx="615.4" cy="96.7" r="3" fill="#3a3a3a" opacity=".55"/><circle cx="614.6" cy="95.8" r="3" fill="url(#gred)"/><circle cx="630.6999999999999" cy="96.7" r="3" fill="#3a3a3a" opacity=".55"/><circle cx="629.9" cy="95.8" r="3" fill="url(#gred)"/>
<circle cx="657.6" cy="89.2" r="8.7" fill="none" stroke="#e2e2e2" stroke-width="3.4"/><circle cx="657.6" cy="89.2" r="7.3" fill="none" stroke="#585858" stroke-width="1.2" opacity=".8"/><path d="M649.2 95.6a10.4 10.4 0 0 0 17.3-1.2" fill="none" stroke="#6a6a6a" stroke-width="1.3" opacity=".8"/><circle cx="657.6" cy="89.2" r="10.3" fill="none" stroke="#c6c6c6" stroke-width=".7"/>
<circle cx="658.0999999999999" cy="89.80000000000001" r="3" fill="#3a3a3a" opacity=".55"/><circle cx="657.3" cy="88.9" r="3" fill="url(#gred)"/><circle cx="667.0999999999999" cy="89.9" r="3" fill="#3a3a3a" opacity=".55"/><circle cx="666.3" cy="89" r="3" fill="url(#gred)"/>
<path d="M686.5 96l15.5-13.5" stroke="#4a4a4a" stroke-width="3.4" opacity=".5" transform="translate(1.2 1.2)"/><path d="M686.5 96l15.5-13.5" stroke="#8e8e8e" stroke-width="3.4"/><path d="M686.5 96l15.5-13.5" stroke="#ececec" stroke-width="1.6"/>
<circle cx="687.0999999999999" cy="96.9" r="3" fill="#3a3a3a" opacity=".55"/><circle cx="686.3" cy="96" r="3" fill="url(#gred)"/><circle cx="702.8" cy="83.10000000000001" r="3" fill="#3a3a3a" opacity=".55"/><circle cx="702" cy="82.2" r="3" fill="url(#gred)"/>
<path d="M721 95.3l5-8 6 7.8 5-12.8" fill="none" stroke="#8e8e8e" stroke-width="2.4"/><path d="M721 95.3l5-8 6 7.8 5-12.8" fill="none" stroke="#ececec" stroke-width="1"/>
<circle cx="721.8" cy="96.2" r="2.7" fill="#3a3a3a" opacity=".55"/><circle cx="721" cy="95.3" r="2.7" fill="url(#gred)"/><circle cx="726.8" cy="88.2" r="2.7" fill="#3a3a3a" opacity=".55"/><circle cx="726" cy="87.3" r="2.7" fill="url(#gred)"/><circle cx="732.8" cy="95.9" r="2.7" fill="#3a3a3a" opacity=".55"/><circle cx="732" cy="95" r="2.7" fill="url(#gred)"/><circle cx="737.5999999999999" cy="82.9" r="2.7" fill="#3a3a3a" opacity=".55"/><circle cx="736.8" cy="82" r="2.7" fill="url(#gred)"/>
<rect x="758.3" y="84.3" width="15.6" height="12" fill="none" stroke="#8a8a8a" stroke-width="1.6" opacity=".8"/><rect x="757.6" y="83.7" width="15" height="11.5" fill="none" stroke="#dedede" stroke-width="2.4"/><rect x="756.6" y="82.7" width="17" height="13.5" fill="none" stroke="#7a7a7a" stroke-width=".9"/><rect x="759" y="85.1" width="12.2" height="8.7" fill="none" stroke="#8a8a8a" stroke-width=".7"/>
<circle cx="773.0999999999999" cy="83.2" r="2.8" fill="#3a3a3a" opacity=".55"/><circle cx="772.3" cy="82.3" r="2.8" fill="url(#gred)"/><circle cx="757.0999999999999" cy="96.9" r="2.8" fill="#3a3a3a" opacity=".55"/><circle cx="756.3" cy="96" r="2.8" fill="url(#gred)"/>
<path d="M802 79.5v19M799.5 96h21.5" stroke="#b4b4b4" stroke-width="2" stroke-dasharray="2.5 1.2"/><path d="M802 84c1 7 6 11.5 13.5 12" fill="none" stroke="#9a9a9a" stroke-width="2.2"/><path d="M802 84c1 7 6 11.5 13.5 12" fill="none" stroke="#efefef" stroke-width="1"/>
<circle cx="802.6999999999999" cy="84.10000000000001" r="2.7" fill="#3a3a3a" opacity=".55"/><circle cx="801.9" cy="83.2" r="2.7" fill="url(#gred)"/><circle cx="816.4" cy="96.7" r="2.7" fill="#3a3a3a" opacity=".55"/><circle cx="815.6" cy="95.8" r="2.7" fill="url(#gred)"/>
<path d="M836.8 78.3l18.2 21.7M849.7 78.5l-8.8 21.5" stroke="#9d9d9d" stroke-width="3"/><path d="M836.8 78.3l18.2 21.7M849.7 78.5l-8.8 21.5" stroke="#e4e4e4" stroke-width="1.3"/>
<circle cx="846.0999999999999" cy="89.60000000000001" r="2.8" fill="#3a3a3a" opacity=".55"/><circle cx="845.3" cy="88.7" r="2.8" fill="url(#gred)"/>
<path d="M889.5 94l3.5-1v5.5l-4 1.5z" fill="#555"/><path d="M870.8 91.5l8.5-3.7 11.9 2.2v7.7l-8.2 3.1-12.2-2.7z" fill="url(#gbox)" stroke="#5564d6" stroke-width=".9" stroke-linejoin="round"/><path d="M870.8 91.5l8.5-3.7 11.9 2.2-8.2 3.2z" fill="#c2ccff" stroke="#6a78e0" stroke-width=".7" stroke-linejoin="round"/><path d="M883 93.2v7.6" stroke="#5564d6" stroke-width=".8"/><path d="M885.5 84l-2 5" stroke="#1a237e" stroke-width="1.4"/><path d="M879 81.2l13 .5" stroke="#10108a" stroke-width="1.8" stroke-dasharray="2.6 1"/>
<circle cx="878.8" cy="81" r="1.8" fill="url(#gred)"/><circle cx="892.4" cy="81.7" r="1.8" fill="url(#gred)"/>
<rect x="909" y="79.3" width="5.2" height="20.2" rx=".8" fill="#fff" stroke="#a8a8a8" stroke-width="1"/><rect x="921.3" y="79.5" width="5" height="20" fill="#8a8a8a"/><path d="M921.3 84.5h5M921.3 89.6h5M921.3 94.7h5" stroke="#5e5e5e" stroke-width="1.2"/><path d="M914.8 89.3l2.6-2.5 2.6 2.5-2.6 2.5z" fill="#c4c4c4" stroke="#8a8a8a" stroke-width=".7"/>
<circle cx="965.9" cy="89.1" r="4.7" fill="#a2a2a2" stroke="#8c8c8c" stroke-width="1"/>
<path d="M995 99.3c-3-7-.5-16.5 17.3-17.3" fill="none" stroke="#8c8c8c" stroke-width="4.6"/><path d="M995 99.3c-3-7-.5-16.5 17.3-17.3" fill="none" stroke="#a3a3a3" stroke-width="3.2"/><circle cx="996.8" cy="84.5" r="3.7" fill="#a6a6a6" stroke="#8c8c8c" stroke-width=".9"/>
<rect x="1034.3" y="79.3" width="4.6" height="20.5" rx=".6" fill="#a2a2a2" stroke="#929292" stroke-width=".8"/>
<rect x="1061.3" y="87.3" width="21.5" height="4.6" rx=".6" fill="#a2a2a2" stroke="#929292" stroke-width=".8"/>
<path d="M1098.2 93l12.7-12.2M1103.7 99.3l12.7-12.2" stroke="#929292" stroke-width="4.8"/><path d="M1098.2 93l12.7-12.2M1103.7 99.3l12.7-12.2" stroke="#a2a2a2" stroke-width="3.4"/>
<path d="M1140.3 80.3h4.6v15h8.3v4.5h-20v-4.5h7.1z" fill="#a2a2a2" stroke="#929292" stroke-width=".8" stroke-linejoin="round"/>
</svg>
<div id="panel" style="left:0;top:109px;width:387px;height:576px">
<div class="lbl" style="left:6px;top:4px;font-size:14.5px">Combo View</div>
<svg style="left:349px;top:6px" width="32" height="14" viewBox="349 115 32 14"><rect x="350.5" y="116.5" width="10.5" height="10.5" rx="2" fill="#f6f5f4" stroke="#7d7a74" stroke-width="1"/><rect x="355.3" y="118.5" width="4" height="4" fill="#f8f8f8" stroke="#7d7a74" stroke-width=".9"/><rect x="353" y="120.8" width="4" height="4" fill="#fff" stroke="#7d7a74" stroke-width=".9"/><rect x="367.5" y="116.5" width="10.5" height="10.5" rx="2" fill="#f6f5f4" stroke="#7d7a74" stroke-width="1"/><path d="M370 119l5.5 5.500M375.5 119l-5.5 5.5" stroke="#6a6864" stroke-width="2"/></svg>
<div style="left:5px;top:29px;width:63px;height:26px;border:1px solid #bdb9b3;border-bottom:none;border-radius:4px 4px 0 0;background:linear-gradient(#f1f0ee,#e0deda)"><div class="lbl" style="left:6px;top:1.5px;font-size:14.8px">Project</div></div>
<div style="left:4.5px;top:53.300px;width:376.500px;height:517.700px;border:1px solid #b5b1ab;border-radius:3px;background:#f7f6f5"></div>
<div style="left:67.500px;top:25px;width:49.500px;height:31px;border:1px solid #bdb9b3;border-bottom:none;border-radius:4px 4px 0 0;background:#f7f6f5"><div class="lbl" style="left:6.500px;top:4.500px;font-size:14.2px">Tasks</div></div>
<div style="left:6.500px;top:55.500px;width:356px;height:514.500px;background:#cbc8c4"></div>
<div class="btn" style="left:100px;top:75px;width:80px;height:23px">Help</div>
<div class="btn" style="left:189px;top:75px;width:81px;height:23px"><u>C</u>lose</div>
<div style="left:366px;top:56px;width:13px;height:514px;border:1px solid #b4b0aa;border-radius:6.500px;background:linear-gradient(90deg,#cfccc8,#e2e0dd)"></div>
<div style="left:366px;top:68px;width:13px;height:439px;border:1px solid #a7a29b;border-radius:6.500px;background:linear-gradient(90deg,#fefefe,#f4f3f2 50%,#e6e5e3)"></div>
<div style="left:367px;top:57px;width:11px;height:14px;border-radius:5.500px 5.500px 0 0;background:linear-gradient(90deg,#e4e2df,#efeeec)"></div>
<div style="left:366px;top:68px;width:13px;height:439px;border:1px solid #a7a29b;border-radius:6.500px;background:linear-gradient(90deg,#fefefe,#f4f3f2 50%,#e6e5e3)"></div>
<div style="left:371px;top:283.700px;width:3.500px;height:9px;background:repeating-linear-gradient(#bab6b0 0 1px,#fdfdfd 1px 2px,transparent 2px 3px)"></div>
<div style="left:382px;top:283.700px;width:3.700px;height:9px;background:repeating-linear-gradient(#d9d6d2 0 1px,#fafaf9 1px 2px,transparent 2px 3px)"></div>
<div class="ud u" style="left:369.900px;top:60.500px;background:#a19d96;transform:scale(.8)"></div>
<div class="ud d" style="left:369.500px;top:561px;background:#5d5b57;width:6.4px;height:4.2px"></div>
<div class="hdr" style="top:116.2px"><div class="pg"></div><div class="st"></div><div class="lbl" style="font-size:13.9px">Solver messages</div><svg style="left:321.8px;top:6px" width="14" height="14" viewBox="0 0 14 14"><circle cx="7" cy="7" r="6.9" fill="#f6f8f8"/><path d="M3.7 5.700l3.3-3 3.3 3M3.4 9.700l3.6-3.4 3.6 3.4" fill="none" stroke="#ec6a38" stroke-width="1.5"/></svg></div>
<div class="body" style="top:141px;height:61px"><div class="ser" style="left:12.500px;top:12.700px;color:#179a17">Fully constrained sketch</div><div class="ser" style="left:12.500px;top:32.800px;color:#444">Solved in 0 sec</div></div>
<div class="hdr" style="top:210px"><div class="pg"></div><div class="st"></div><div class="lbl" style="font-size:14.4px">Edit controls</div><svg style="left:321.8px;top:6px" width="14" height="14" viewBox="0 0 14 14"><circle cx="7" cy="7" r="6.9" fill="#f6f8f8"/><path d="M3.7 5.700l3.3-3 3.3 3M3.4 9.700l3.6-3.4 3.6 3.4" fill="none" stroke="#ec6a38" stroke-width="1.5"/></svg></div>
<div class="body" style="top:235px;height:107px">
<div class="lbl" style="left:13px;top:17px;font-size:14px">Grid size:</div>
<div class="combo" style="left:174px;top:14px;width:152px;height:24px"><div class="lbl" style="left:5px;top:2px;font-size:14.1px">10 mm</div><div class="ud u" style="left:138.500px;top:7.300px;width:6px"></div><div class="ud d" style="left:138.500px;top:15.200px;width:6px"></div></div>
<div class="cb" style="left:15.400px;top:48.500px"></div><div class="lbl" style="left:37.500px;top:46.500px;font-size:14.1px">Grid snap</div>
<div class="cb on" style="left:15.400px;top:76px"></div><svg style="left:15px;top:74px" width="20" height="18" viewBox="30 418 20 18"><path d="M33.6 427.300l3.9 4.2 8.3-10" fill="none" stroke="#6e2f1b" stroke-width="2.1"/></svg><div class="lbl" style="left:37.500px;top:74px;font-size:15px">Auto constraints</div>
</div>
<div class="hdr" style="top:349.8px"><div class="pg"></div><div class="st"></div><div class="lbl" style="font-size:14.3px">Constraints</div><svg style="left:321.8px;top:6px" width="14" height="14" viewBox="0 0 14 14"><circle cx="7" cy="7" r="6.9" fill="#f6f8f8"/><path d="M3.7 5.700l3.3-3 3.3 3M3.4 9.700l3.6-3.4 3.6 3.4" fill="none" stroke="#ec6a38" stroke-width="1.5"/></svg></div>
<div class="body" style="top:374.500px;height:196px">
<div class="lbl" style="left:13px;top:16px;font-size:15.2px">Filter:</div>
<div class="combo" style="left:174px;top:13.500px;width:152px;height:24px"><div class="lbl" style="left:5px;top:2px;font-size:14.6px">Normal</div><div class="ud u" style="left:138.500px;top:7.300px;width:6px"></div><div class="ud d" style="left:138.500px;top:15.200px;width:6px"></div></div>
<div style="left:12.500px;top:44.800px;width:298.500px;height:152px;background:#fff;border:1px solid #bcb8b2;border-bottom:none;overflow:hidden">
<div class="row" style="top:1.0px"><div class="lbl" style="font-size:14.85px">Constraint2</div></div>
<div class="row" style="top:26.5px"><div class="lbl" style="font-size:14.85px">Constraint4</div></div>
<div class="row" style="top:52.0px"><div class="lbl" style="font-size:14.85px">Constraint5</div></div>
<div class="row" style="top:77.5px"><div class="lbl" style="font-size:14.85px">Constraint6</div></div>
<div class="row" style="top:103.0px"><div class="lbl" style="font-size:14.85px">Constraint8</div></div>
<div class="row" style="top:128.5px"><div class="lbl" style="font-size:14.85px">Constraint9</div></div>
<svg style="left:0;top:0" width="60" height="152" viewBox="28.5 529.3 60 152"><g fill="#f42200" stroke="#b01a00" stroke-width=".8">
<rect x="33.2" y="541" width="20.6" height="3.9" rx=".8"/>
<rect x="33.2" y="566.5" width="20.6" height="3.9" rx=".8"/>
<path d="M42 584.8h3.700v13.400h8v3.900h-20.500v-3.900h8.800z"/>
<path d="M42 610.3h3.700v13.400h8v3.900h-20.500v-3.900h8.800z"/>
<rect x="41.4" y="634.8" width="3.8" height="20.3" rx=".8"/>
<rect x="41.4" y="660.3" width="3.8" height="20.3" rx=".8"/>
</g></svg>
</div>
<div style="left:314.300px;top:44.800px;width:12.500px;height:160px;border:1px solid #b4b0aa;border-radius:6px;background:linear-gradient(90deg,#cfccc8,#e2e0dd)"></div>
<div style="left:314.300px;top:57px;width:12.500px;height:62px;border:1px solid #a7a29b;border-radius:6px;background:linear-gradient(90deg,#fefefe,#f4f3f2 50%,#e6e5e3)"></div>
<div style="left:318.300px;top:85.500px;width:4.500px;height:5px;background:repeating-linear-gradient(#aeaaa4 0 1px,#fdfdfd 1px 2px)"></div>
<div style="left:315.300px;top:45.800px;width:10.500px;height:14px;border-radius:5.500px 5.500px 0 0;background:linear-gradient(90deg,#e4e2df,#efeeec)"></div>
<div style="left:314.300px;top:57px;width:12.500px;height:62px;border:1px solid #a7a29b;border-radius:6px;background:linear-gradient(90deg,#fefefe,#f4f3f2 50%,#e6e5e3)"></div>
<div style="left:318.300px;top:85.500px;width:4.500px;height:5px;background:repeating-linear-gradient(#aeaaa4 0 1px,#fdfdfd 1px 2px)"></div>
<div class="ud u" style="left:318px;top:49.500px;background:#a19d96;transform:scale(.8)"></div>
</div>
<div style="left:4.500px;top:570px;width:376.500px;height:1px;background:#b5b1ab"></div>
</div>
<svg style="left:387px;top:109px" width="809" height="540" viewBox="387 109 809 540">
<defs><linearGradient id="bg" x1="0" y1="0" x2="0" y2="1"><stop offset="0" stop-color="#333366"/><stop offset="1" stop-color="#9496ac"/></linearGradient></defs>
<rect x="387" y="109" width="809" height="540" fill="url(#bg)"/>
<g stroke="#cfcfd4" stroke-width="1" stroke-dasharray="4.3 3.5" fill="none">
<path d="M446.5 109V531"/>
<path d="M517.5 109V531"/>
<path d="M588.5 109V531"/>
<path d="M659.5 109V531"/>
<path d="M730.5 109V531"/>
<path d="M872.5 109V531"/>
<path d="M944.5 109V531"/>
<path d="M1015.5 109V531"/>
<path d="M1086.5 109V531"/>
<path d="M1157.5 109V531"/>
<path d="M801.5 514V531"/>
<path d="M388 174.5H1196"/>
<path d="M388 246.5H1196"/>
<path d="M388 317.5H1196"/>
<path d="M388 388.5H1196"/>
<path d="M388 531.5H1196"/>
</g>
<path d="M387 459.9H1196" stroke="#dc5a5a" stroke-width="1.4"/>
<path d="M802.0 109V215" stroke="#66cc66" stroke-width="2"/>
<path d="M801.8 460V513.5" stroke="#62cf62" stroke-width="1.6"/>
<g stroke="#00ff00" fill="none" stroke-linejoin="round">
<path stroke-width="3.1" d="M631.3 460H488.6V487.6H659.3V460"/>
<path stroke-width="2.8" d="M631.3 460A170.5 170.5 0 0 1 972.3 460"/>
<path stroke-width="2.8" d="M659.3 460A142.5 142.5 0 0 1 944.3 460"/>
<path stroke-width="3.1" d="M972.3 460H1115V487.6H944.3V460"/>
</g>
<path d="M634.5 460H656" stroke="#0000d2" stroke-width="3"/>
<text transform="translate(805.5 211.5) rotate(-90)" font-family="Liberation Sans,sans-serif" font-size="11.5" fill="#b02a1c">20.00</text>
<path d="M802.0 215V460" stroke="#ff2600" stroke-width="2.3"/>
<g stroke="#ff2600" stroke-width="1.9" fill="none">
<path d="M488.6 335.5V458"/><path d="M630.9 271.5V458"/><path d="M659.5 271.5V458"/>
<path d="M489 341.3H545M581 341.3H631.3"/>
<path d="M605.6 278.5H631.3M659.3 278.5H678"/>
</g>
<g fill="#ff2600">
<path d="M489.3 341.3l5.5 -2.8v5.6z"/><path d="M630.5 341.3l-5.5 -2.8v5.6z"/>
<path d="M630.5 278.5l-5.5 -2.8v5.6z"/><path d="M660.0999999999999 278.5l5.5 -2.8v5.6z"/>
</g>
<g font-family="Liberation Sans,sans-serif" font-size="11.5" fill="#a8281c">
<text x="548.5" y="344.8">20.00</text><text x="682" y="281.8">4.00</text>
</g>
<g fill="#00ff00">
<circle cx="488.6" cy="460" r="3.4"/>
<circle cx="488.6" cy="487.6" r="3.4"/>
<circle cx="659.3" cy="487.6" r="3.4"/>
<circle cx="659.3" cy="460" r="3.4"/>
<circle cx="631.3" cy="460" r="3.4"/>
<circle cx="801.8" cy="460" r="3.4"/>
<circle cx="944.3" cy="487.6" r="3.4"/>
<circle cx="972.3" cy="460" r="3.4"/>
<circle cx="1115" cy="460" r="3.4"/>
<circle cx="1115" cy="487.6" r="3.4"/>
</g>
<g fill="#ff2600">
<rect x="472.5" y="467.6" width="2.7" height="13.4"/>
<rect x="1098.7" y="467.5" width="3.0" height="13.5"/>
<rect x="553" y="466.4" width="4.3" height="10.4"/>
<rect x="553" y="471.3" width="13" height="3.7"/>
<rect x="548" y="476.6" width="13.8" height="3.8"/>
<rect x="555.9" y="496" width="10.1" height="3.8"/>
<rect x="555.9" y="503.1" width="10.1" height="3.8"/>
<rect x="567" y="500" width="14.2" height="3.9"/>
<rect x="626.9" y="441" width="10.1" height="3.8"/>
<rect x="626.9" y="447.9" width="10.1" height="3.9"/>
<rect x="655" y="468.5" width="13" height="3.5"/>
<rect x="655" y="475.2" width="13" height="3.7"/>
<rect x="943" y="468.7" width="10" height="3.3"/>
<rect x="943" y="475.5" width="10" height="3.6"/>
<rect x="1037.5" y="440" width="4.0" height="10"/>
<rect x="1037" y="445" width="13" height="3.7"/>
<rect x="1033" y="450" width="13" height="4"/>
<rect x="1011" y="469.5" width="10" height="3.5"/>
<rect x="1011" y="476.5" width="10" height="3.5"/>
<rect x="1022" y="473.5" width="14" height="3.5"/>
<rect x="795" y="268.8" width="5.6" height="10.2"/>
<rect x="790.2" y="278.6" width="13.4" height="3.8"/>
</g>
<g stroke="#ff2600" fill="none" stroke-linecap="round">
<path d="M663.5 454.8l9.5 8.7" stroke-width="3.2"/><path d="M661 458.800h5" stroke-width="2.4"/><path d="M671.5 465v13" stroke-width="2.6" stroke-linecap="butt"/>
<path d="M951.5 454.800l9.5 8.7" stroke-width="3.2"/><path d="M948 458.800h5" stroke-width="2.4"/><path d="M956.5 465v16" stroke-width="2.8" stroke-linecap="butt"/>
</g>
<path d="M929.7 455.800l7 1.2 11 2.600v.8l-11 1.8-7 1.400z" fill="#6a2222"/><path d="M931 456.500v6.5" stroke="#3f1515" stroke-width="1.6"/>
<path d="M799.5 323.500l1.2-1.500v9.300h-2.300zM803.3 322l1.2 1.5 1 7.800h-2.200z" fill="#1a1f86"/>
<g font-family="Liberation Sans,sans-serif" font-size="10.5" fill="#e02616">
<text x="563.2" y="481">5</text>
<text x="569.3" y="509.8">25</text>
<text x="640.3" y="454.6">28</text>
<text x="668" y="482">28</text>
<text x="671.5" y="482">14</text>
<text x="958" y="482">14</text>
<text x="1047.3" y="454.6">6</text>
<text x="1023.8" y="483">25</text>
<text x="805.8" y="283.3">6</text>
</g>
<path d="M1167.9 623V604" stroke="#1414c8" stroke-width="1.7"/><path d="M1167.9 605.500l1.9 5.500h-3.800z" fill="#1414c8"/>
<path d="M1167.9 623H1186.5" stroke="#b01818" stroke-width="1.8"/><path d="M1185 623l-5.5-1.900v3.800z" fill="#b01818"/><circle cx="1167.9" cy="623" r="1" fill="#0a7a0a"/>
<g font-family="Liberation Sans,sans-serif" font-size="9.5" fill="#1a1a1a"><text x="1171" y="605.3">Z</text><text x="1171" y="622.3">Y</text><text x="1188.5" y="622.8">X</text></g>
</svg>
 <div style="left:387px;top:649px;width:808px;height:34px;background:#f2f1f0"></div>
 <div style="left:387.5px;top:648.5px;width:108.5px;height:31px;border:1px solid #c4c0ba;border-top:none;border-radius:0 0 5px 5px;background:linear-gradient(#dad7d3,#eae8e5 40%,#f0efed)"><div class="lbl" style="left:7px;top:7px;font-size:14.6px">Start page</div><svg style="left:83px;top:10.5px" width="13" height="12" viewBox="0 0 13 12"><path d="M1.7 1.500l9.3 9M11 1.500l-9.3 9" stroke="#5b5955" stroke-width="3.2"/></svg></div>
 <div style="left:495.5px;top:648.5px;width:153.500px;height:33.500px;border:1px solid #c4c0ba;border-top:none;border-radius:0 0 5px 5px;background:#fbfbfa"><div class="lbl" style="left:30px;top:8px;font-size:14.4px">Unnamed : 1*</div><svg style="left:128.500px;top:11.500px" width="13" height="12" viewBox="0 0 13 12"><path d="M1.7 1.500l9.3 9M11 1.500l-9.3 9" stroke="#5b5955" stroke-width="3.2"/></svg>
 <svg style="left:5.3px;top:9px" width="20" height="16" viewBox="501.5 657.5 20 16"><path d="M503 658.800h7.500v3h-4.300v2h3v2.800h-3v3.800h-3.200z" fill="#f03a14"/><path d="M503 658.800h1.200v11.600h-1.200z" fill="#c22"/><g transform="translate(512.3 666.5)"><g fill="#16359a"><rect x="-1.1" y="-5" width="2.2" height="10"/><rect x="-1.1" y="-5" width="2.2" height="10" transform="rotate(45)"/><rect x="-1.1" y="-5" width="2.2" height="10" transform="rotate(90)"/><rect x="-1.1" y="-5" width="2.2" height="10" transform="rotate(135)"/><circle r="3.6"/></g><circle r="1.7" fill="#fff"/></g></svg></div>
 <div id="winedge" style="left:3px;top:30px;width:2.2px;height:652px;background:linear-gradient(90deg,#a9a7a3 0 1.2px,#d4d2cf 1.2px)"></div>
</div>
</body></html>
